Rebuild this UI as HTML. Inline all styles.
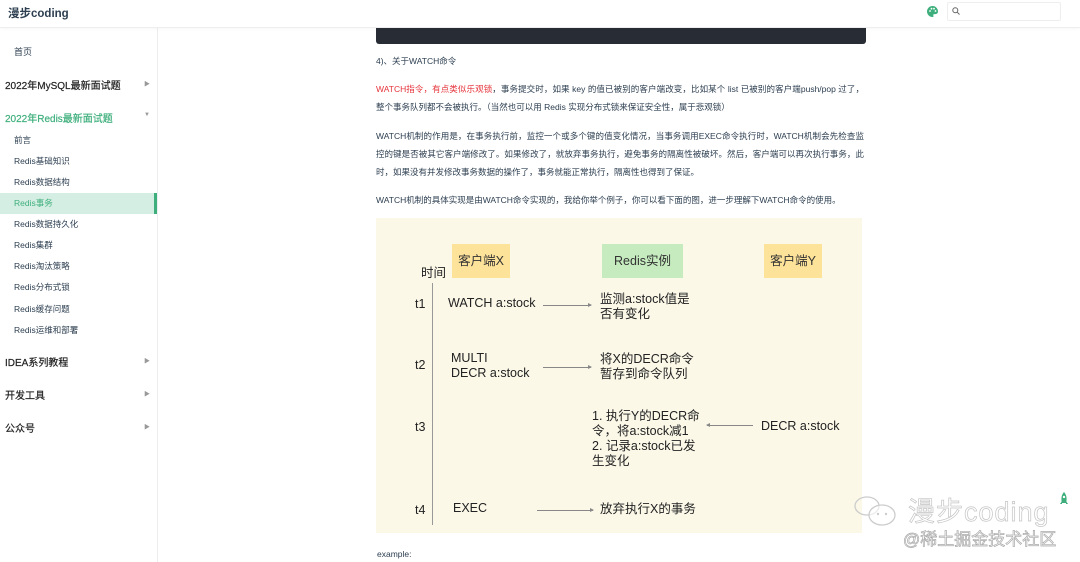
<!DOCTYPE html>
<html><head><meta charset="utf-8"><style>
*{margin:0;padding:0;box-sizing:border-box}
body{width:1080px;height:562px;overflow:hidden;background:#fff;font-family:"Liberation Sans","Noto Sans CJK SC",sans-serif;color:#2c3e50;position:relative}
.hdr{position:absolute;left:0;top:0;width:1080px;height:28px;background:#fff;border-bottom:1px solid #eee;z-index:5;box-shadow:0 1px 3px rgba(0,0,0,.03)}
.logo{position:absolute;left:8px;top:5px;font-size:11.5px;font-weight:bold;color:#2c3e50}
.side{position:absolute;left:0;top:28px;width:158px;height:534px;border-right:1px solid #eaecef;background:#fff}
.si{position:absolute;font-size:9px;color:#2c3e50;white-space:nowrap}
.grp{position:absolute;left:5px;font-size:10px;color:#222;white-space:nowrap;-webkit-text-stroke:.2px #222}
.arr{position:absolute;left:144px;font-size:6px;color:#999}
.sub{position:absolute;left:14px;font-size:8.5px;color:#2c3e50;white-space:nowrap}
.t{position:absolute;left:376px;width:488px;font-size:8.5px;line-height:18px;color:#2c3e50;text-align:justify;text-align-last:justify;white-space:nowrap}
.d{position:absolute;white-space:nowrap;color:#222;font-size:12.5px;line-height:15px}
.box{position:absolute;height:34px;font-size:12.5px;line-height:34px;text-align:center;color:#333}
.ar{position:absolute;height:1px;background:#888}
.ar:after{content:"";position:absolute;right:-1px;top:-2px;border-left:4px solid #888;border-top:2.5px solid transparent;border-bottom:2.5px solid transparent}
.al:after{left:-1px;right:auto;border-left:none;border-right:4px solid #888}
</style></head><body>
<div class="hdr"><div class="logo">漫步coding</div>
<svg style="position:absolute;left:926px;top:5px" width="13" height="13" viewBox="0 0 13 13"><path d="M6.5 1a5.5 5.5 0 0 0 0 11c1 0 1.3-.7.9-1.4-.4-.7 0-1.5.9-1.5h1.5A2.7 2.7 0 0 0 12 6.5 5.5 5.5 0 0 0 6.5 1z" fill="#3eaf7c"/><circle cx="4" cy="6" r=".9" fill="#fff"/><circle cx="5.5" cy="3.7" r=".9" fill="#fff"/><circle cx="8" cy="3.7" r=".9" fill="#fff"/><circle cx="9.5" cy="6" r=".9" fill="#fff"/></svg>
<div style="position:absolute;left:947px;top:2px;width:114px;height:19px;border:1px solid #eee;border-radius:2px"></div>
<svg style="position:absolute;left:952px;top:7px" width="8" height="8" viewBox="0 0 8 8"><circle cx="3.3" cy="3.3" r="2.5" fill="none" stroke="#666" stroke-width="1"/><path d="M5.2 5.2L7.5 7.5" stroke="#666"/></svg>
</div>
<div style="position:absolute;left:376px;top:0;width:490px;height:44px;background:#282c34;border-radius:3px"></div>
<div class="side">
<div class="si" style="left:14px;top:17px">首页</div>
<div class="grp" style="top:49px">2022年MySQL最新面试题</div><div class="arr" style="top:51px">▶</div>
<div class="grp" style="top:82px;color:#3eaf7c;-webkit-text-stroke:.2px #3eaf7c">2022年Redis最新面试题</div><div class="arr" style="top:84px">▼</div>
<div class="sub" style="top:106px">前言</div>
<div class="sub" style="top:127px">Redis基础知识</div>
<div class="sub" style="top:148px">Redis数据结构</div>
<div style="position:absolute;left:0;top:165px;width:157px;height:21px;background:#d5eee3;border-right:3px solid #3eaf7c"></div>
<div class="sub" style="top:169px;color:#3eaf7c">Redis事务</div>
<div class="sub" style="top:190px">Redis数据持久化</div>
<div class="sub" style="top:211px">Redis集群</div>
<div class="sub" style="top:232px">Redis淘汰策略</div>
<div class="sub" style="top:253px">Redis分布式锁</div>
<div class="sub" style="top:275px">Redis缓存问题</div>
<div class="sub" style="top:296px">Redis运维和部署</div>
<div class="grp" style="top:326px">IDEA系列教程</div><div class="arr" style="top:328px">▶</div>
<div class="grp" style="top:359px">开发工具</div><div class="arr" style="top:361px">▶</div>
<div class="grp" style="top:392px">公众号</div><div class="arr" style="top:394px">▶</div>
</div>
<div class="t" style="top:52px;text-align-last:left">4)、关于WATCH命令</div>
<div class="t" style="top:80px"><span style="color:#e5343b">WATCH指令，有点类似乐观锁</span>，事务提交时，如果 key 的值已被别的客户端改变，比如某个 list 已被别的客户端push/pop 过了，</div>
<div class="t" style="top:98px;text-align-last:left">整个事务队列都不会被执行。（当然也可以用 Redis 实现分布式锁来保证安全性，属于悲观锁）</div>
<div class="t" style="top:127px">WATCH机制的作用是，在事务执行前，监控一个或多个键的值变化情况，当事务调用EXEC命令执行时，WATCH机制会先检查监</div>
<div class="t" style="top:145px">控的键是否被其它客户端修改了。如果修改了，就放弃事务执行，避免事务的隔离性被破坏。然后，客户端可以再次执行事务，此</div>
<div class="t" style="top:163px;text-align-last:left">时，如果没有并发修改事务数据的操作了，事务就能正常执行，隔离性也得到了保证。</div>
<div class="t" style="top:191px;text-align-last:left">WATCH机制的具体实现是由WATCH命令实现的，我给你举个例子，你可以看下面的图，进一步理解下WATCH命令的使用。</div>
<div style="position:absolute;left:376px;top:218px;width:486px;height:315px;background:#fbf8e8"></div>
<div class="box" style="left:452px;top:244px;width:58px;background:#fde29a">客户端X</div>
<div class="box" style="left:602px;top:244px;width:81px;background:#c6ebbf">Redis实例</div>
<div class="box" style="left:764px;top:244px;width:58px;background:#fde29a">客户端Y</div>
<div class="d" style="left:421px;top:266px">时间</div>
<div style="position:absolute;left:432px;top:283px;width:1px;height:242px;background:#999"></div>
<div class="d" style="left:415px;top:297px">t1</div>
<div class="d" style="left:415px;top:358px">t2</div>
<div class="d" style="left:415px;top:420px">t3</div>
<div class="d" style="left:415px;top:503px">t4</div>
<div class="d" style="left:448px;top:296px">WATCH a:stock</div>
<div class="ar" style="left:543px;top:305px;width:48px"></div>
<div class="d" style="left:600px;top:292px">监测a:stock值是<br>否有变化</div>
<div class="d" style="left:451px;top:351px">MULTI<br>DECR a:stock</div>
<div class="ar" style="left:543px;top:367px;width:48px"></div>
<div class="d" style="left:600px;top:352px">将X的DECR命令<br>暂存到命令队列</div>
<div class="d" style="left:592px;top:409px">1. 执行Y的DECR命<br>令，将a:stock减1<br>2. 记录a:stock已发<br>生变化</div>
<div class="ar al" style="left:707px;top:425px;width:46px"></div>
<div class="d" style="left:761px;top:419px">DECR a:stock</div>
<div class="d" style="left:453px;top:501px">EXEC</div>
<div class="ar" style="left:537px;top:510px;width:56px"></div>
<div class="d" style="left:600px;top:502px">放弃执行X的事务</div>
<div style="position:absolute;left:377px;top:549px;font-size:8.5px;color:#2c3e50">example:</div>
<svg style="position:absolute;left:852px;top:494px" width="50" height="34" viewBox="0 0 50 34"><ellipse cx="15" cy="12" rx="12" ry="9" fill="none" stroke="#ccc" stroke-width="1.3"/><ellipse cx="30" cy="21" rx="13" ry="10" fill="rgba(255,255,255,.6)" stroke="#ccc" stroke-width="1.3"/><circle cx="26" cy="20" r="1.2" fill="#ccc"/><circle cx="34" cy="20" r="1.2" fill="#ccc"/></svg>
<div style="position:absolute;left:908px;top:490px;font-size:27px;color:#fff;-webkit-text-stroke:.7px #c4c4c4;letter-spacing:1px">漫步coding</div>
<div style="position:absolute;left:903px;top:525px;font-size:17px;color:#fff;-webkit-text-stroke:.7px #aaa">@稀土掘金技术社区</div>
<svg style="position:absolute;left:1059px;top:492px" width="10" height="14" viewBox="0 0 10 14"><path d="M5 0C2 3 2 8 3 11h4C8 8 8 3 5 0z" fill="#3eaf7c"/><path d="M3 9L1 12h2zM7 9l2 3H7z" fill="#3eaf7c"/><circle cx="5" cy="5" r="1.2" fill="#fff"/></svg>
</body></html>
